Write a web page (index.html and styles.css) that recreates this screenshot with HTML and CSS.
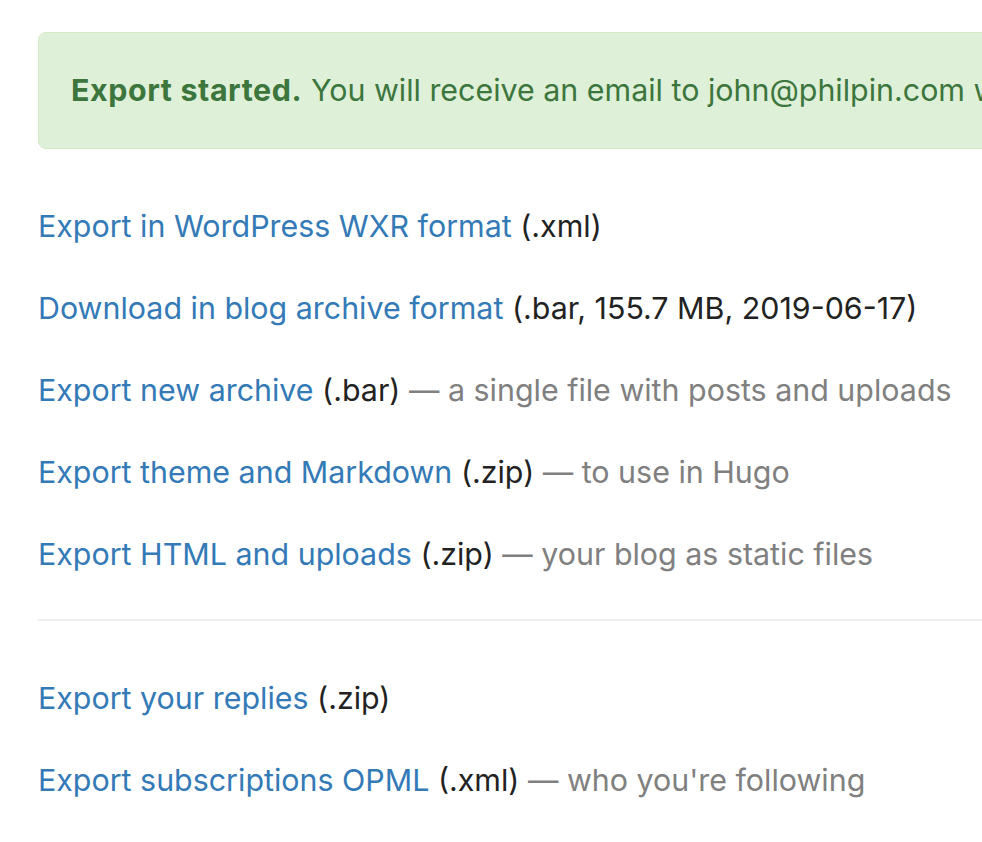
FILE: index.html
```html
<!DOCTYPE html>
<html>
<head>
<meta charset="utf-8">
<link rel="stylesheet" href="styles.css">
</head>
<body>
<div class="page">
  <div class="alert"><strong>Export started.</strong> You will receive an email to john@philpin.com when the export is ready.</div>
  <div class="list">
    <p><a href="#">Export in WordPress WXR format</a> (.xml)</p>
    <p><a href="#">Download in blog archive format</a> (.bar, 155.7 MB, 2019-06-17)</p>
    <p><a href="#">Export new archive</a> (.bar) <span class="note">— a single file with posts and uploads</span></p>
    <p><a href="#">Export theme and Markdown</a> (.zip) <span class="note">— to use in Hugo</span></p>
    <p><a href="#">Export HTML and uploads</a> (.zip) <span class="note">— your blog as static files</span></p>
  </div>
  <hr class="divider">
  <div class="list">
    <p><a href="#">Export your replies</a> (.zip)</p>
    <p><a href="#">Export subscriptions OPML</a> (.xml) <span class="note">— who you're following</span></p>
  </div>
</div>
</body>
</html>
```

FILE: styles.css
```css
html, body {
  margin: 0;
  padding: 0;
  background: #fff;
  overflow: hidden;
}
body {
  font-family: Inter, "Helvetica Neue", Arial, sans-serif;
  font-size: 30.4px;
  color: #222;
}
.page {
  padding: 32px 0 0 38px;
  width: 1300px;
}
.alert {
  background: #dff0d8;
  border: 1px solid #d6e9c6;
  color: #3c763d;
  border-radius: 8px;
  padding: 32px;
  line-height: 51px;
  white-space: nowrap;
  overflow: hidden;
}
.alert strong {
  font-weight: 700;
  letter-spacing: 0.6px;
}
.list {
  display: flex;
  flex-direction: column;
  gap: 39px;
  margin-top: 56px;
}
.list p {
  margin: 0;
  line-height: 43px;
  white-space: nowrap;
}
.list a {
  color: #337ab7;
  text-decoration: none;
}
.note {
  color: #808080;
}
.divider {
  border: 0;
  border-top: 2px solid #eee;
  margin: 43px 0 0 0;
  height: 0;
}
```
